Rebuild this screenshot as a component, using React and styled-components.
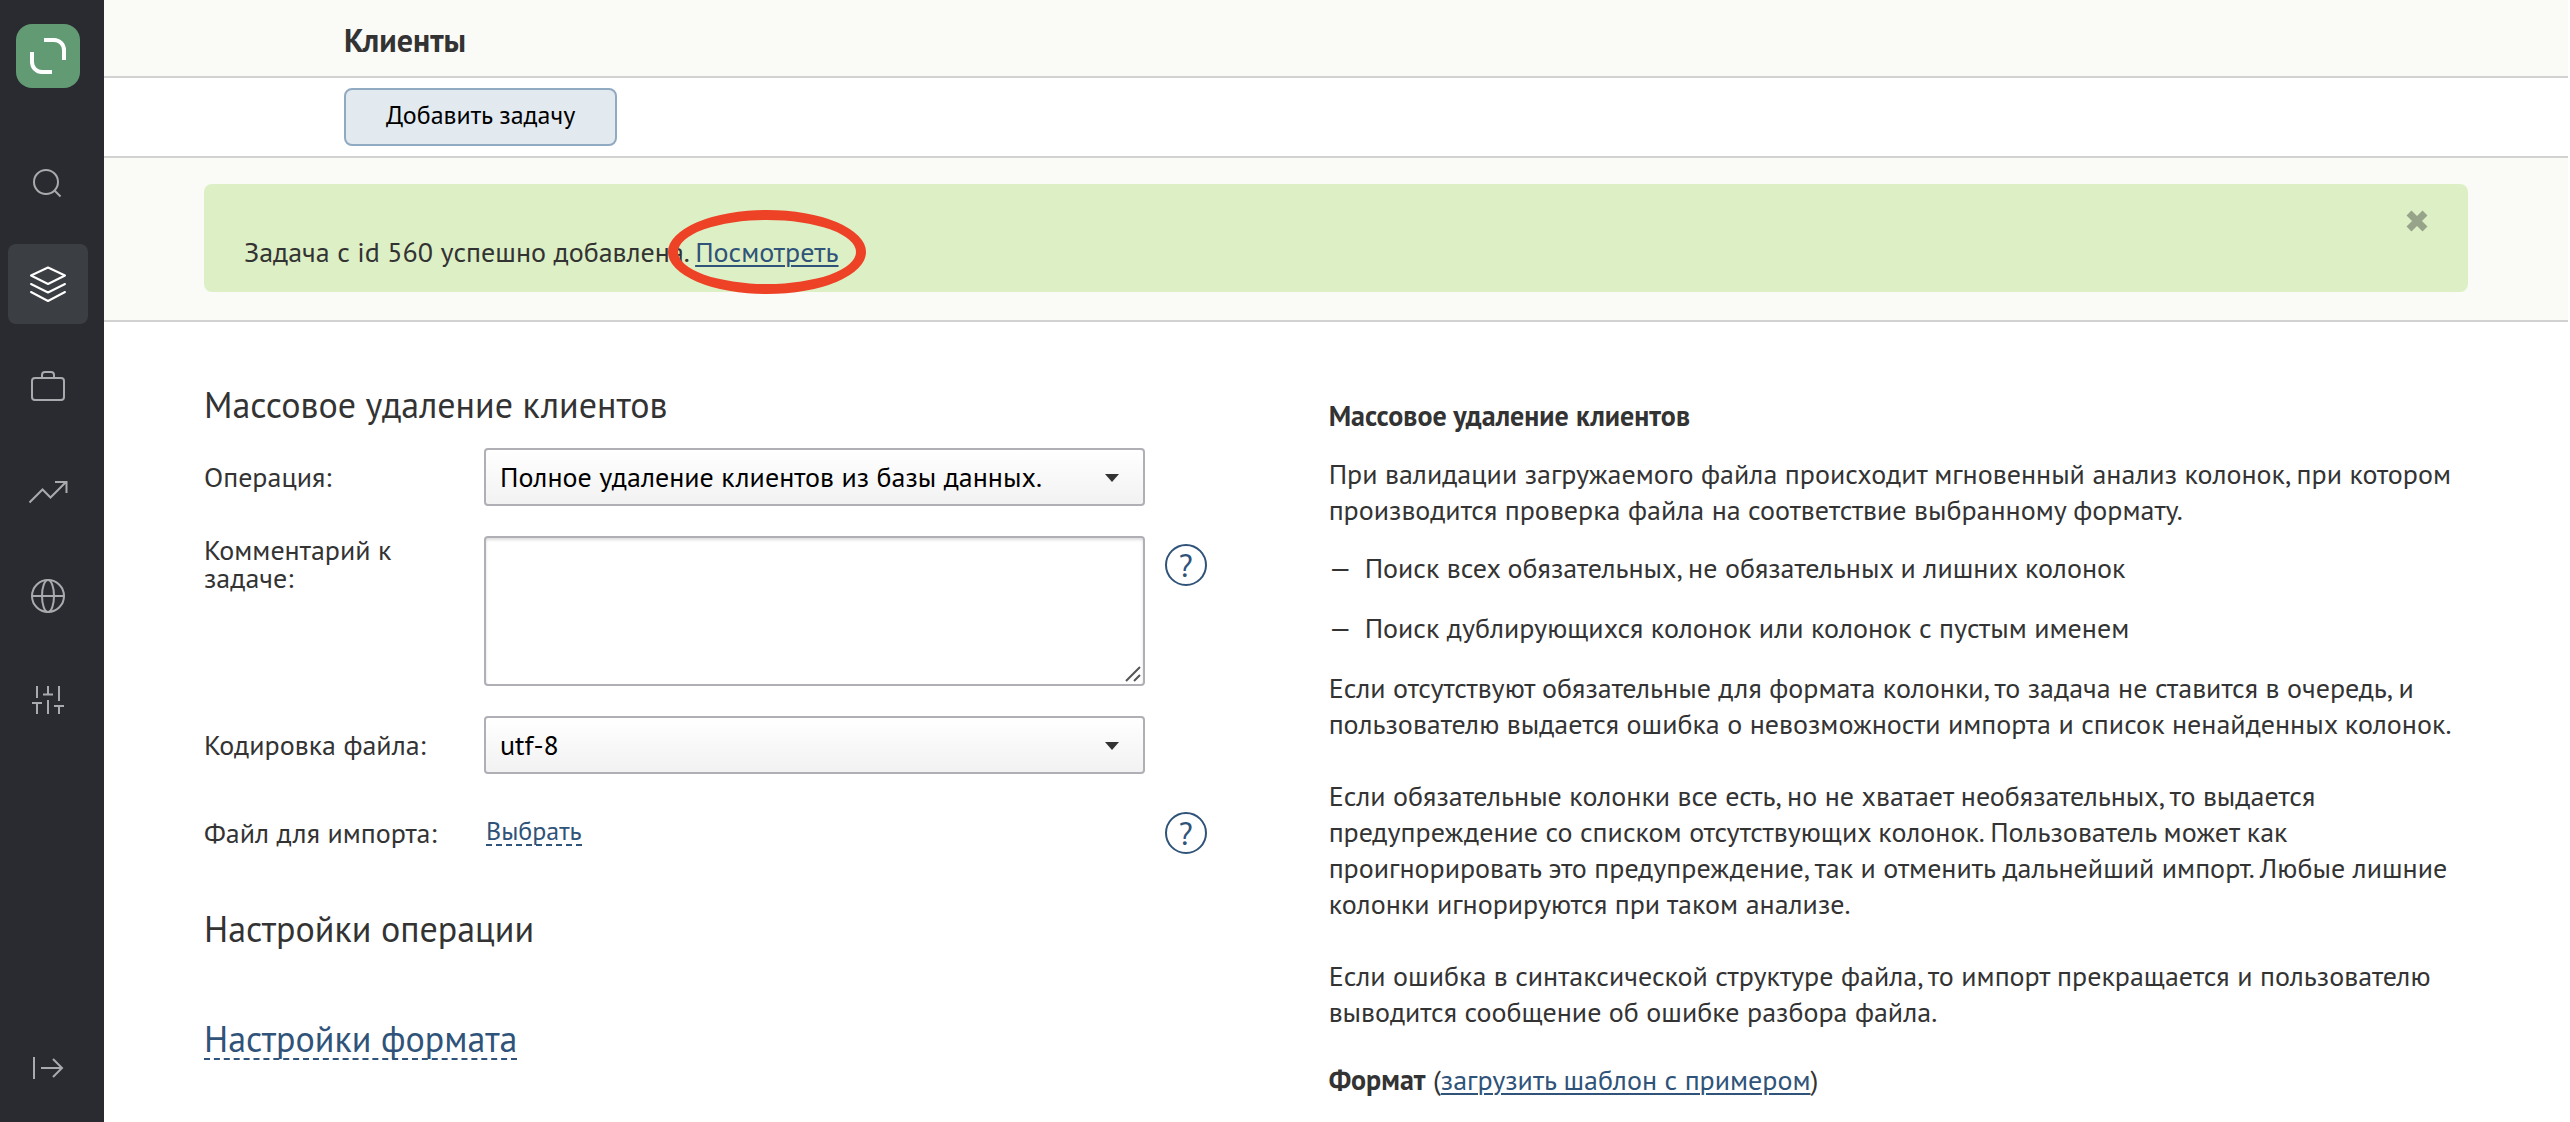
import React from 'react';
import styled, { createGlobalStyle } from 'styled-components';

const GlobalStyle = createGlobalStyle`
  *, *::before, *::after {
    box-sizing: border-box;
  }
  body {
    margin: 0;
    background: #fff;
    color: #333;
    font-family: "PT Sans", "Noto Sans", "Open Sans", sans-serif;
    font-size: 28px;
    line-height: 36px;
  }
  button, select, textarea {
    font-family: inherit;
  }
`;

const Page = styled.div`
  display: flex;
  min-height: 100vh;
  padding-right: 2px;
`;

const Sidebar = styled.nav`
  display: flex;
  flex-direction: column;
  flex: none;
  gap: 24px;
  width: 104px;
  padding: 24px 16px 14px 8px;
  background: #2a2b30;
`;

const Logo = styled.a`
  display: block;
  width: 64px;
  height: 64px;
  margin: 0 8px 28px;
  border-radius: 16px;
  background: #629b73;
  color: #fff;
`;

const NavLink = styled.a`
  display: block;
  width: 80px;
  height: 80px;
  border-radius: 8px;
  color: ${(props) => (props.$active ? '#fff' : '#a9aaad')};
  background: ${(props) => (props.$active ? '#3b3e43' : 'transparent')};
  margin-top: ${(props) => (props.$last ? 'auto' : '0')};
`;

const Icon = styled.svg`
  display: block;
  fill: none;
  stroke: currentColor;
  stroke-width: ${(props) => props.$stroke || 2};
`;

const Content = styled.div`
  flex: 1;
  min-width: 0;
`;

const Header = styled.header`
  padding: 22px 240px 18px;
  border-bottom: 2px solid #d2d2d2;
  background: #fafaf6;
`;

const PageTitle = styled.h1`
  margin: 0;
  font-size: 32px;
  line-height: 36px;
`;

const Toolbar = styled.div`
  display: flex;
  padding: 10px 240px;
  border-bottom: 2px solid #d2d2d2;
`;

const AddButton = styled.button`
  height: 58px;
  padding: 0 40px 6px;
  border: 2px solid #90aac2;
  border-radius: 8px;
  background: #e2e9ef;
  color: #000;
  font-size: 26px;
`;

const NoticeArea = styled.section`
  padding: 26px 100px 28px;
  border-bottom: 2px solid #d2d2d2;
  background: #fafaf6;
`;

const Notice = styled.div`
  display: flex;
  justify-content: space-between;
  padding: 22px 40px;
  border-radius: 8px;
  background: #ddefc5;
`;

const NoticeText = styled.p`
  margin: 28px 0 0;
`;

const CloseButton = styled.button`
  align-self: flex-start;
  padding: 4px 0;
  border: 0;
  background: none;
  color: #98a48a;
  line-height: 0;
`;

const Link = styled.a`
  color: #2f5379;
  text-decoration: underline 2px;
  text-underline-offset: 3px;
`;

const Circled = styled.span`
  position: relative;
  &::after {
    content: "";
    position: absolute;
    top: 50%;
    left: 50%;
    width: 198px;
    height: 84px;
    border: 10px solid #ed4226;
    border-radius: 50%;
    transform: translate(-50%, -50%);
    pointer-events: none;
  }
`;

const Columns = styled.main`
  display: grid;
  grid-template-columns: 88fr 100fr;
  gap: 122px;
  padding: 63px 100px 0;
`;

const SectionTitle = styled.h2`
  margin: 0;
  font-size: 36px;
  font-weight: 400;
  line-height: 40px;
`;

const Form = styled.form`
  display: flex;
  flex-direction: column;
  gap: 30px;
  margin: 23px 0 47px;
`;

const Field = styled.div`
  display: grid;
  grid-template-columns: 260px 1fr 42px;
  gap: 20px;
  align-items: ${(props) => (props.$top ? 'start' : 'center')};
  min-height: 58px;
`;

const Label = styled.label`
  padding-right: 20px;
  line-height: 28px;
  white-space: ${(props) => (props.$wrap ? 'normal' : 'nowrap')};
`;

const SelectBox = styled.div`
  position: relative;
  &::after {
    content: "";
    position: absolute;
    top: 26px;
    right: 26px;
    border: 7px solid transparent;
    border-top: 8px solid #333;
    border-bottom: 0;
    pointer-events: none;
  }
`;

const Select = styled.select`
  display: block;
  width: 100%;
  height: 58px;
  padding: 0 14px 2px;
  appearance: none;
  border: 2px solid #afafb5;
  border-radius: 4px;
  background: linear-gradient(#fff, #f2f2f2);
  color: #000;
  font-size: 28px;
`;

const TextBox = styled.div`
  position: relative;
`;

const TextArea = styled.textarea`
  display: block;
  width: 100%;
  height: 150px;
  padding: 8px 14px;
  resize: none;
  border: 2px solid #afafb5;
  border-radius: 4px;
  background: #fff;
  box-shadow: inset 0 2px 3px #dededf;
  font-size: 28px;
`;

const Grip = styled(Icon)`
  position: absolute;
  right: 4px;
  bottom: 4px;
  color: #555;
  pointer-events: none;
`;

const HelpButton = styled.button`
  width: 42px;
  height: 42px;
  margin-top: ${(props) => (props.$top ? '8px' : '0')};
  padding: 0;
  border: 2px solid #2f5379;
  border-radius: 50%;
  background: none;
  color: #2f5379;
  font-size: 32px;
  line-height: 36px;
`;

const FileButton = styled.button`
  justify-self: start;
  margin-left: 2px;
  margin-bottom: 2px;
  padding: 0;
  border: 0;
  border-bottom: 2px dashed #2f5379;
  background: none;
  color: #2f5379;
  font-size: 26px;
  line-height: 26px;
`;

const FormatTitle = styled(SectionTitle)`
  margin-top: 71px;
  line-height: 38px;
`;

const FormatLink = styled.a`
  display: inline-block;
  border-bottom: 2px dashed #2f5379;
  color: #2f5379;
  text-decoration: none;
`;

const Help = styled.article`
  padding-top: 13px;
`;

const HelpTitle = styled.h3`
  margin: 0 0 22px;
  font-size: 28px;
  line-height: 36px;
`;

const Paragraph = styled.p`
  margin: 0;
`;

const List = styled.ul`
  display: flex;
  flex-direction: column;
  gap: 24px;
  margin: 22px 0 24px;
  padding: 0;
  list-style: none;
`;

const ListItem = styled.li`
  display: flex;
  &::before {
    content: "—";
    flex: none;
    width: 36px;
  }
`;

const FormatLine = styled.p`
  margin: 32px 0 0;
`;

const navIcons = [
  {
    name: 'Поиск',
    icon: (
      <>
        <circle cx="38" cy="42" r="12" />
        <path d="M46.5 50.5l6 6" />
      </>
    ),
  },
  {
    name: 'Данные',
    active: true,
    icon: (
      <path
        strokeLinejoin="round"
        strokeLinecap="round"
        d="M40 23.5L23 31.5L40 40L57 31.5ZM23 40L40 48.5L57 40M23 48L40 57L57 48"
      />
    ),
  },
  {
    name: 'Продукты',
    icon: (
      <>
        <rect x="24" y="30" width="32" height="22" rx="3" />
        <path d="M34 30v-3a3 3 0 0 1 3-3h6a3 3 0 0 1 3 3v3" />
      </>
    ),
  },
  {
    name: 'Отчеты',
    icon: <path d="M21.5 50.5L34.5 37.5L42.5 45.5L58 30M47 30H58.5V41" />,
  },
  {
    name: 'Интеграции',
    icon: (
      <>
        <circle cx="40" cy="40" r="16" />
        <ellipse cx="40" cy="40" rx="6" ry="16" />
        <path d="M24 40h32" />
      </>
    ),
  },
  {
    name: 'Настройки',
    icon: (
      <path d="M29 26V38M24 43H34M29 43V54M40 26V35M35 34.5H45M40 40V54M51 26V41M46 46H56M51 46V54" />
    ),
  },
];

export default function App() {
  return (
    <>
      <GlobalStyle />
      <Page>
        <Sidebar>
          <Logo href="#" aria-label="Главная">
            <Icon width="64" height="64" $stroke={4}>
              <path d="M28 16h10a10 10 0 0 1 10 10v10M16 28v10a10 10 0 0 0 10 10h10" />
            </Icon>
          </Logo>
          {navIcons.map((item) => (
            <NavLink key={item.name} href="#" aria-label={item.name} $active={item.active}>
              <Icon width="80" height="80">{item.icon}</Icon>
            </NavLink>
          ))}
          <NavLink href="#" aria-label="Развернуть" $last>
            <Icon width="80" height="80">
              <path d="M26 29V51M33 40H54M45 31L54 40L45 49" />
            </Icon>
          </NavLink>
        </Sidebar>

        <Content>
          <Header>
            <PageTitle>Клиенты</PageTitle>
          </Header>
          <Toolbar>
            <AddButton type="button">Добавить задачу</AddButton>
          </Toolbar>
          <NoticeArea>
            <Notice>
              <NoticeText>
                Задача с id 560 успешно добавлена.{' '}
                <Circled><Link href="#">Посмотреть</Link></Circled>
              </NoticeText>
              <CloseButton type="button" aria-label="Закрыть">
                <svg width="22" height="22" viewBox="0 0 22 22">
                  <path d="M3 3L19 19M19 3L3 19" stroke="currentColor" strokeWidth="7" />
                </svg>
              </CloseButton>
            </Notice>
          </NoticeArea>

          <Columns>
            <div>
              <SectionTitle>Массовое удаление клиентов</SectionTitle>
              <Form>
                <Field>
                  <Label htmlFor="operation">Операция:</Label>
                  <SelectBox>
                    <Select id="operation">
                      <option>Полное удаление клиентов из базы данных.</option>
                    </Select>
                  </SelectBox>
                </Field>
                <Field $top>
                  <Label htmlFor="comment" $wrap>Комментарий к задаче:</Label>
                  <TextBox>
                    <TextArea id="comment" />
                    <Grip width="16" height="16">
                      <path d="M1 15L15 1M9 15L15 9" />
                    </Grip>
                  </TextBox>
                  <HelpButton type="button" $top>?</HelpButton>
                </Field>
                <Field>
                  <Label htmlFor="encoding">Кодировка файла:</Label>
                  <SelectBox>
                    <Select id="encoding">
                      <option>utf-8</option>
                    </Select>
                  </SelectBox>
                </Field>
                <Field>
                  <Label htmlFor="file">Файл для импорта:</Label>
                  <FileButton type="button" id="file">Выбрать</FileButton>
                  <HelpButton type="button">?</HelpButton>
                </Field>
              </Form>
              <SectionTitle>Настройки операции</SectionTitle>
              <FormatTitle>
                <FormatLink href="#">Настройки формата</FormatLink>
              </FormatTitle>
            </div>

            <Help>
              <HelpTitle>Массовое удаление клиентов</HelpTitle>
              <Paragraph>
                При валидации загружаемого файла происходит мгновенный анализ колонок, при котором
                производится проверка файла на соответствие выбранному формату.
              </Paragraph>
              <List>
                <ListItem>Поиск всех обязательных, не обязательных и лишних колонок</ListItem>
                <ListItem>Поиск дублирующихся колонок или колонок с пустым именем</ListItem>
              </List>
              <Paragraph>
                Если отсутствуют обязательные для формата колонки, то задача не ставится в очередь, и
                пользователю выдается ошибка о невозможности импорта и список ненайденных колонок.
                <br />
                <br />
                Если обязательные колонки все есть, но не хватает необязательных, то выдается
                предупреждение со списком отсутствующих колонок. Пользователь может как
                проигнорировать это предупреждение, так и отменить дальнейший импорт. Любые лишние
                колонки игнорируются при таком анализе.
                <br />
                <br />
                Если ошибка в синтаксической структуре файла, то импорт прекращается и пользователю
                выводится сообщение об ошибке разбора файла.
              </Paragraph>
              <FormatLine>
                <b>Формат</b> (<Link href="#">загрузить шаблон с примером</Link>)
              </FormatLine>
            </Help>
          </Columns>
        </Content>
      </Page>
    </>
  );
}
